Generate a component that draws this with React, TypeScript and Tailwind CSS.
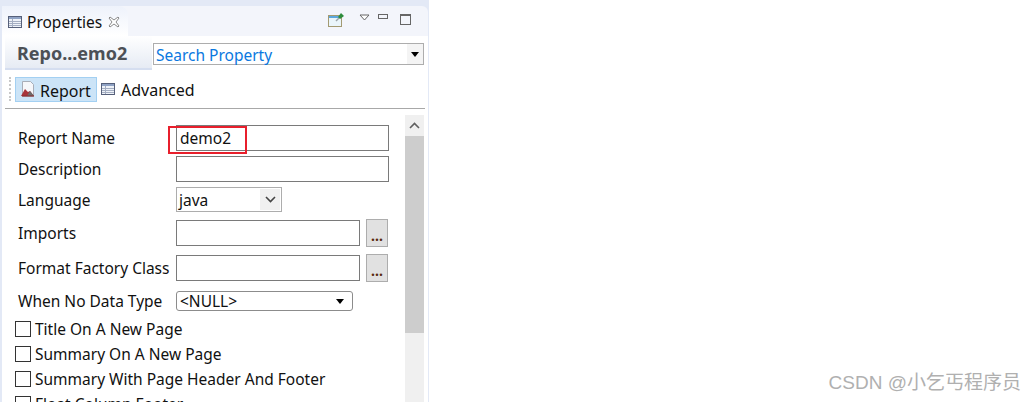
import React from 'react'

const TableIcon = ({ className = '' }: { className?: string }) => (
  <svg width="16" height="16" viewBox="0 0 16 16" className={className}>
    <rect x="1.5" y="2.5" width="13" height="11" fill="#eef2f8" stroke="#56607a" />
    <rect x="2" y="3" width="12" height="2" fill="#8fa2c4" />
    <path d="M2 7.5h12M2 9.5h12M2 11.5h12M5.5 5v8" stroke="#a4aec2" strokeWidth="1" />
  </svg>
)

const ReportIcon = () => (
  <svg width="16" height="18" viewBox="0 0 16 18">
    <path d="M2.5 1.500h8l3 3v12h-11z" fill="#f6f7fa" stroke="#a9aeb8" />
    <path d="M1 16l4-7 3 3 2-1 4 5z" fill="#a8343a" />
    <path d="M7 16l3-5 4 5z" fill="#6d6a6a" />
    <path d="M2 16h12" stroke="#8c2a2e" />
  </svg>
)

const PinIcon = () => (
  <svg width="18" height="16" viewBox="0 0 18 16">
    <rect x="1.5" y="3.5" width="13" height="11" fill="#eaf5fb" stroke="#a39a72" />
    <rect x="2" y="4" width="12" height="2" fill="#5da8de" />
    <path d="M9 9l3-3" stroke="#9aa4a8" strokeWidth="1.5" />
    <path d="M11 5l3-4 3 3-4 3z" fill="#2d8c3c" />
  </svg>
)

const TextRow = ({ label, value }: { label: string; value?: string }) => (
  <div className="flex items-center h-[26px]">
    <div className="w-[158px] text-[15.5px] pt-[1px]">{label}</div>
    <div className="w-[213px] h-[26px] border border-[#7a7a7a] px-[3px] text-[15.5px] leading-[25px]">{value}</div>
  </div>
)

const BrowseRow = ({ label }: { label: string }) => (
  <div className="flex items-center h-[28px]">
    <div className="w-[158px] text-[15.5px] pt-[2px] whitespace-nowrap">{label}</div>
    <div className="w-[184px] h-[26px] border border-[#7a7a7a]" />
    <div className="ml-[6px] w-[22px] h-[28px] bg-[#e1e1e1] border border-[#adadad] flex items-end justify-center text-[14px] font-bold leading-[20px] text-[#5a2a10]">
      ...
    </div>
  </div>
)

const Check = ({ label }: { label: string }) => (
  <div className="flex items-center h-[16px] gap-[4px] -ml-[3px]">
    <div className="w-[16px] h-[16px] border border-[#333] bg-white shrink-0" />
    <div className="text-[15.5px] leading-[16px] whitespace-nowrap">{label}</div>
  </div>
)

export default function App() {
  return (
    <div
      className="w-[1036px] h-[402px] overflow-hidden bg-white flex text-[#111] font-['Noto_Sans','Open_Sans',sans-serif]"
    >
      {/* Properties view */}
      <div className="w-[429px] h-[402px] shrink-0 bg-[#e3e9f6] pt-[6px] pl-[2px] pr-[1px] flex flex-col">
        {/* tab bar */}
        <div className="h-[30px] bg-[#f3f5fb] rounded-tr-[6px] flex shrink-0">
          <div className="w-[126px] bg-gradient-to-b from-[#eef2fb] to-white rounded-tr-[9px] flex items-center pl-[5px] pt-[2px]">
            <TableIcon />
            <span className="ml-[4px] text-[15.5px] pt-[1px]">Properties</span>
            <svg width="12" height="12" viewBox="0 0 12 12" className="ml-[6px]">
              <path d="M2 1l4 3 4-3 1 1-3 4 3 4-1 1-4-3-4 3-1-1 3-4-3-4z" fill="#fff" stroke="#8a8a8a" />
            </svg>
          </div>
          <div className="flex-1 flex items-start pt-[6px]">
            <div className="ml-[199px]">
              <PinIcon />
            </div>
            <svg width="12" height="8" viewBox="0 0 12 8" className="ml-[14px] mt-[2px]">
              <path d="M1 1h9l-4.500 5z" fill="#fff" stroke="#666" />
            </svg>
            <div className="ml-[7px] mt-[2px] w-[10px] h-[5px] border border-[#666]" />
            <div className="ml-[12px] mt-[2px] w-[11px] h-[11px] border border-[#666] border-t-[2px]" />
          </div>
        </div>

        <div className="flex-1 bg-white flex flex-col min-h-0">
          {/* form title + search */}
          <div className="h-[34px] flex shrink-0">
            <div className="ml-[3px] w-[147px] h-[34px] bg-gradient-to-b from-white to-[#e6ebf4] border-b-2 border-[#d5def0] pl-[12px] text-[18px] font-bold text-[#4c5056] leading-[35px]">
              Repo...emo2
            </div>
            <div className="ml-[1px] mt-[7px] w-[271px] h-[22px] border border-[#adadad] flex items-center justify-between pl-[2px]">
              <span className="text-[15.5px] pt-[3px] text-[#0a78e0]">Search Property</span>
              <div className="w-[16px] h-[20px] bg-[#f4f4f4] flex items-center justify-center">
                <svg width="8" height="5" viewBox="0 0 8 5"><path d="M0 0h8l-4 5z" fill="#000" /></svg>
              </div>
            </div>
          </div>

          {/* toolbar */}
          <div className="h-[39px] flex items-center shrink-0 mx-[3px] border-b border-[#a8a8a8]">
            <div className="ml-[4px] w-[2px] h-[24px] border-l-2 border-dotted border-[#c8c8c8]" />
            <div className="ml-[4px] w-[82px] h-[25px] bg-[#cce4f7] border border-[#a3d0f2] flex items-center pl-[4px] gap-[4px] text-[16px]">
              <ReportIcon />
              <span className="pt-[3px]">Report</span>
            </div>
            <div className="ml-[3px] flex items-center gap-[5px] text-[16px]">
              <TableIcon />
              <span className="pt-[1px]">Advanced</span>
            </div>
          </div>

          {/* form body */}
          <div className="flex-1 flex min-h-0 overflow-hidden">
            <div className="relative w-[403px] pl-[16px] pt-[16px] flex flex-col">
              <TextRow label="Report Name" value="demo2" />
              <div className="h-[5px] shrink-0" />
              <TextRow label="Description" />
              <div className="flex items-center h-[25px] mt-[5px]">
                <div className="w-[158px] text-[15.5px] pt-[3px]">Language</div>
                <div className="w-[106px] h-[25px] border border-[#adadad] flex items-center justify-between pl-[2px] pr-[1px] text-[15.5px]">
                  <span className="pt-[2px]">java</span>
                  <div className="w-[20px] h-[21px] bg-[#f0f0f0] flex items-center justify-center">
                    <svg width="11" height="7" viewBox="0 0 11 7"><path d="M1 1l4.500 4.500L10 1" fill="none" stroke="#444" strokeWidth="1.600" /></svg>
                  </div>
                </div>
              </div>
              <div className="mt-[7px]"><BrowseRow label="Imports" /></div>
              <div className="mt-[7px]"><BrowseRow label="Format Factory Class" /></div>
              <div className="flex items-center h-[20px] mt-[9px]">
                <div className="w-[158px] text-[15.5px] pt-[1px] whitespace-nowrap">When No Data Type</div>
                <div className="w-[177px] h-[20px] border border-[#8c8c8c] rounded-[3px] flex items-center justify-between pl-[3px] pr-[8px] text-[15.5px]">
                  <span className="pt-[1px]">&lt;NULL&gt;</span>
                  <svg width="8" height="5" viewBox="0 0 8 5"><path d="M0 0h8l-4 5z" fill="#000" /></svg>
                </div>
              </div>
              <div className="flex flex-col gap-[9px] mt-[10px]">
                <Check label="Title On A New Page" />
                <Check label="Summary On A New Page" />
                <Check label="Summary With Page Header And Footer" />
                <Check label="Float Column Footer" />
              </div>
              {/* red highlight */}
              <div className="absolute left-[166px] top-[17px] w-[79px] h-[28px] border-2 border-[#e81f2c]" />
            </div>

            {/* scrollbar */}
            <div className="w-[19px] mt-[6px] bg-[#f0f0f0] flex flex-col shrink-0">
              <div className="h-[21px] flex items-center justify-center">
                <svg width="11" height="7" viewBox="0 0 11 7"><path d="M1 6l4.500-4.500L10 6" fill="none" stroke="#606060" strokeWidth="1.600" /></svg>
              </div>
              <div className="h-[197px] bg-[#cdcdcd]" />
            </div>
          </div>
        </div>
      </div>

      {/* watermark */}
      <div className="flex-1 flex items-end justify-end pr-[15px] pb-[5px]">
        <span className="text-[19px] text-[#b0b0b0] whitespace-nowrap font-['Liberation_Sans','Noto_Sans_CJK_SC',sans-serif]">
          CSDN @小乞丐程序员
        </span>
      </div>
    </div>
  )
}
